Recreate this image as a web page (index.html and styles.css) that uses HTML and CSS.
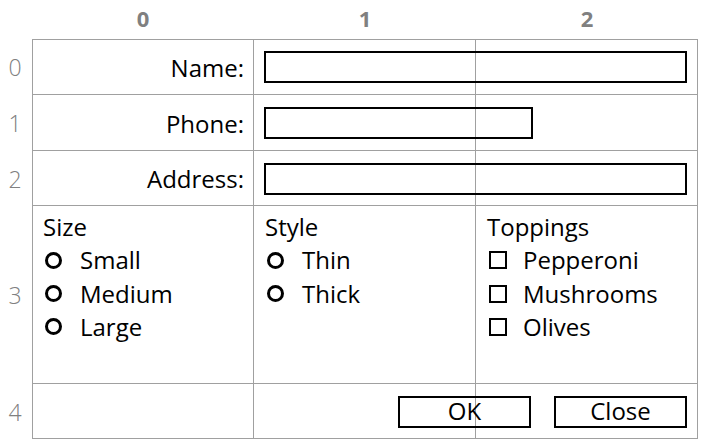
FILE: index.html
```html
<!DOCTYPE html>
<html lang="en">
  <head>
    <meta charset="UTF-8" />
    <title>Pizza Order</title>
    <link rel="stylesheet" href="styles.css">
  </head>
  <body>
    <div class="sheet">
      <!-- column and row numbers -->
      <div class="colhead c1">0</div>
      <div class="colhead c2">1</div>
      <div class="colhead c3">2</div>
      <div class="rowhead r1">0</div>
      <div class="rowhead r2">1</div>
      <div class="rowhead r3">2</div>
      <div class="rowhead r4">3</div>
      <div class="rowhead r5">4</div>

      <!-- grid lines, drawn under the controls -->
      <div class="lines">
        <div></div><div></div><div></div>
        <div></div><div></div><div></div>
        <div></div><div></div><div></div>
        <div></div><div></div><div></div>
        <div></div><div></div><div></div>
      </div>

      <label class="field-label r1 c1" for="name">Name:</label>
      <input class="box r1 span" id="name" type="text" />

      <label class="field-label r2 c1" for="phone">Phone:</label>
      <input class="box r2 span short" id="phone" type="text" />

      <label class="field-label r3 c1" for="address">Address:</label>
      <input class="box r3 span" id="address" type="text" />

      <div class="group r4 c1">
        <div class="group-title">Size</div>
        <label class="option"><span class="radio"></span>Small</label>
        <label class="option"><span class="radio"></span>Medium</label>
        <label class="option"><span class="radio"></span>Large</label>
      </div>

      <div class="group r4 c2">
        <div class="group-title">Style</div>
        <label class="option"><span class="radio"></span>Thin</label>
        <label class="option"><span class="radio"></span>Thick</label>
      </div>

      <div class="group r4 c3">
        <div class="group-title">Toppings</div>
        <label class="option"><span class="check"></span>Pepperoni</label>
        <label class="option"><span class="check"></span>Mushrooms</label>
        <label class="option"><span class="check"></span>Olives</label>
      </div>

      <div class="buttons r5 span">
        <button class="btn">OK</button>
        <button class="btn">Close</button>
      </div>
    </div>
  </body>
</html>
```

FILE: styles.css
```css
body {
  margin: 0;
  font-family: "Open Sans", "Noto Sans", sans-serif;
  font-size: 24px;
  color: #000;
  background: #fff;
}
.sheet {
  display: grid;
  grid-template-columns: 32px 222px 222px 222px;
  grid-template-rows: 39px 56px 56px 55px 178px 55px;
  width: 707px;
}

/* placement */
.c1 { grid-column: 2; }
.c2 { grid-column: 3; }
.c3 { grid-column: 4; }
.span { grid-column: 3 / 5; }
.r1 { grid-row: 2; }
.r2 { grid-row: 3; }
.r3 { grid-row: 4; }
.r4 { grid-row: 5; }
.r5 { grid-row: 6; }
.colhead { grid-row: 1; }
.rowhead { grid-column: 1; }

.colhead {
  display: flex;
  align-items: center;
  justify-content: center;
  font-weight: bold;
  font-size: 22px;
  color: #808080;
  padding-bottom: 4px;
}
.rowhead {
  display: flex;
  align-items: center;
  justify-content: center;
  font-weight: 300;
  font-size: 23px;
  color: #808080;
  padding-right: 2px;
}

.lines {
  grid-row: 2 / 7;
  grid-column: 2 / 5;
  display: grid;
  grid-template-columns: 222px 222px 222px;
  grid-template-rows: 56px 56px 55px 178px 55px;
}
.lines div {
  box-sizing: border-box;
  border-right: 1px solid #a0a0a0;
  border-bottom: 1px solid #a0a0a0;
}
.lines div:nth-child(-n+3) {
  border-top: 1px solid #a0a0a0;
}
.lines div:nth-child(3n+1) {
  border-left: 1px solid #a0a0a0;
}

.field-label {
  display: flex;
  align-items: center;
  justify-content: flex-end;
  padding-right: 10px;
}
.box {
  align-self: center;
  box-sizing: border-box;
  height: 32px;
  margin: 0 11px 0 10px;
  border: 2px solid #000;
  background: transparent;
  font: inherit;
  padding: 0 4px;
  outline: none;
}
.box.short {
  width: 269px;
  margin-right: 0;
}

.group {
  padding: 4px 11px;
  line-height: 33.4px;
}
.option {
  display: flex;
  align-items: center;
}
.radio {
  box-sizing: border-box;
  width: 17px;
  height: 17px;
  border: 3px solid #000;
  border-radius: 50%;
  margin: 0 18px 0 2px;
}
.check {
  box-sizing: border-box;
  width: 18px;
  height: 18px;
  border: 2px solid #000;
  margin: 0 16px 0 2px;
}

.buttons {
  display: flex;
  align-items: center;
  justify-content: flex-end;
  gap: 23px;
  padding-right: 11px;
}
.btn {
  box-sizing: border-box;
  width: 133px;
  height: 32px;
  border: 2px solid #000;
  background: transparent;
  font: inherit;
  padding: 0 0 2px;
  line-height: 1;
}
```
